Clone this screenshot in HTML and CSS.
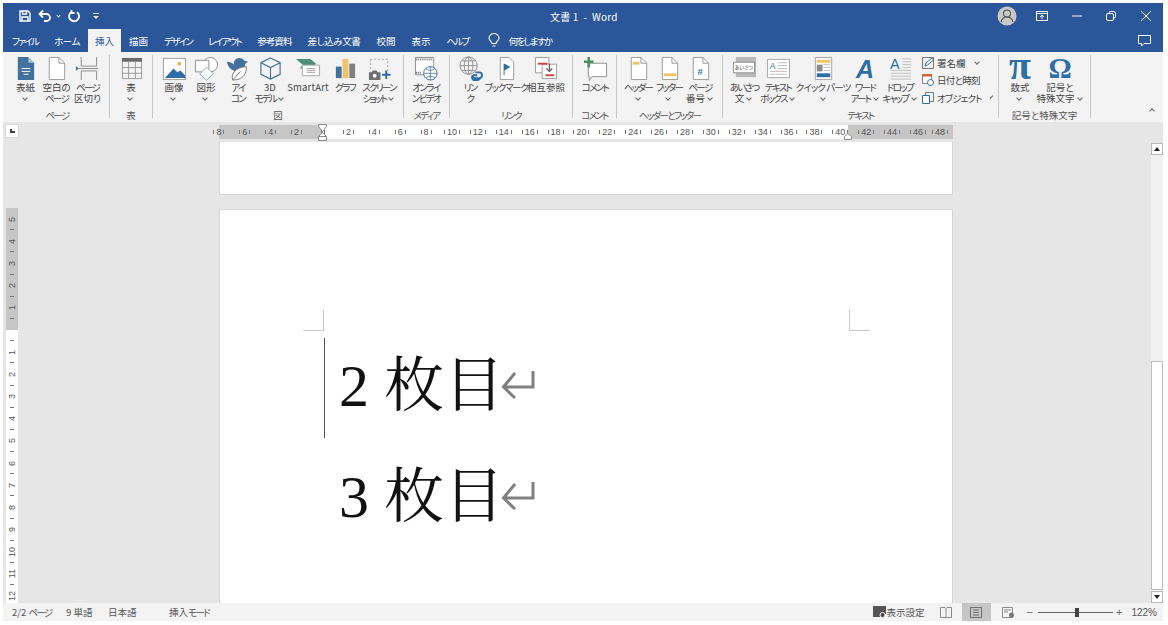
FILE: index.html
```html
<!DOCTYPE html>
<html lang="ja">
<head>
    <meta charset="UTF-8">
    <title>文書 1 - Word</title>
    <link rel="stylesheet" href="styles.css">
</head>

<body>
    <div id="word">
        <!-- タイトルバー -->
        <div class="titlebar">
            <div class="qat">
                <svg width="14" height="14" viewBox="0 0 14 14" fill="none" stroke="#fff" stroke-width="1.4"><path d="M2 2h8l2 2v8H2z"/><path d="M4.500 2v3h4V2M4 12V8h6v4"/></svg>
                <svg class="undo" width="16" height="14" viewBox="0 0 16 14" fill="none" stroke="#fff" stroke-width="1.8"><path d="M6 1.500 2.500 5 6 8.500M3 5h6.500a3 3 0 0 1 0 7H7"/></svg>
                <span class="chev white"></span>
                <svg class="redo" width="14" height="14" viewBox="0 0 14 14" fill="none" stroke="#fff" stroke-width="1.8"><path d="M10 3.200a5 5 0 1 1-5.500-.2M4.500 1v3h3"/></svg>
                <svg class="more" width="6" height="8" viewBox="0 0 6 8" fill="#dfe6f2"><path d="M0 1h6v1H0zM0 4h6L3 7z"/></svg>
            </div>
            <div class="doctitle">文書 1 &nbsp;-&nbsp; Word</div>
            <div class="winbtns">
                <svg class="avatar" width="20" height="20" viewBox="0 0 20 20"><circle cx="10" cy="10" r="9.500" fill="#c9c9c9"/><circle cx="10" cy="7.500" r="3.500" fill="none" stroke="#555" stroke-width="1.100"/><path d="M4 16c1-4 3-5 6-5s5 1 6 5" fill="none" stroke="#555" stroke-width="1.100"/></svg>
                <svg class="wb1" width="12" height="10" viewBox="0 0 12 10" fill="none" stroke="#fff"><path d="M.5.500h11v9H.5zM.5 2.500h11M6 8V4M4 6l2-2 2 2"/></svg>
                <svg class="wb2" width="10" height="10" viewBox="0 0 10 10" stroke="#fff"><path d="M0 5h10"/></svg>
                <svg class="wb3" width="10" height="10" viewBox="0 0 10 10" fill="none" stroke="#fff"><rect x=".5" y="2.500" width="7" height="7" rx="1.500"/><path d="M3 2.500V2a1.500 1.500 0 0 1 1.500-1.500h3A2 2 0 0 1 9.500 2.500v3A1.500 1.500 0 0 1 8 7h-.5"/></svg>
                <svg class="wb4" width="10" height="10" viewBox="0 0 10 10" stroke="#fff"><path d="M0 0l10 10M10 0 0 10"/></svg>
            </div>
        </div>

        <!-- タブ -->
        <div class="tabs">
            <span class="tab k">ファイル</span>
            <span class="tab k3">ホーム</span>
            <span class="tab active">挿入</span>
            <span class="tab">描画</span>
            <span class="tab k">デザイン</span>
            <span class="tab k">レイアウト</span>
            <span class="tab k1">参考資料</span>
            <span class="tab k3">差し込み文書</span>
            <span class="tab">校閲</span>
            <span class="tab">表示</span>
            <span class="tab k">ヘルプ</span>
            <svg class="bulb" width="12" height="15" viewBox="0 0 12 15" fill="none" stroke="#fff" stroke-width="1.100"><path d="M4 10.500C4 8.500 1 7.500 1 5a5 4.500 0 0 1 10 0c0 2.500-3 3.500-3 5.500zM4.500 13h3"/></svg>
            <span class="tab tell k">何をしますか</span>
            <svg class="cmt-ico" width="13" height="12" viewBox="0 0 13 12" fill="none" stroke="#fff"><path d="M.5.500h12v8H6L3.500 11V8.500h-3z"/></svg>
        </div>

        <!-- リボン -->
        <div class="ribbon">
            <div class="group g1">
                <div class="btns">
                    <div class="btn w31">
                        <svg class="ico" viewBox="0 0 26 26"><path d="M5 1h11l6 6v18H5z" fill="#41719c"/><path d="M16 1v6h6z" fill="#a9c4dd"/><path d="M9 13h9M9 16h9M11 19h5" stroke="#fff"/></svg>
                        <span class="lbl">表紙<br><i class="chev"></i></span>
                    </div>
                    <div class="btn w31">
                        <svg class="ico" viewBox="0 0 26 26"><path d="M5.500 1.500h10l6 6v17h-16z" fill="#fff" stroke="#9a9a9a"/><path d="M15.500 1.500v6h6" fill="none" stroke="#9a9a9a"/></svg>
                        <span class="lbl">空白の<br><span class="k">ページ</span></span>
                    </div>
                    <div class="btn w31">
                        <svg class="ico" viewBox="0 0 26 26" fill="none" stroke="#8a8a8a"><path d="M6.500 1v9.500h16V1M6.500 25V15.500h16V25M4 13h20"/><path d="M1 10.500 4 13l-3 2.500z" fill="#41719c" stroke="none"/></svg>
                        <span class="lbl"><span class="k">ページ</span><br>区切り</span>
                    </div>
                </div>
                <div class="glabel k">ページ</div>
            </div>

            <div class="group g2">
                <div class="btns">
                    <div class="btn w32">
                        <svg class="ico" viewBox="0 0 26 26"><path d="M3 2h21v4H3z" fill="#6b6b6b"/><path d="M3.500 6v17.500h20V6M3.500 12h20M3.500 18h20M10 6v17.500M17 6v17.500" fill="none" stroke="#9a9a9a"/></svg>
                        <span class="lbl">表<br><i class="chev"></i></span>
                    </div>
                </div>
                <div class="glabel">表</div>
            </div>

            <div class="group g3">
                <div class="btns">
                    <div class="btn w32">
                        <svg class="ico" viewBox="0 0 26 26"><rect x="1.500" y="2.500" width="23" height="22" fill="#fff" stroke="#a0a0a0"/><path d="M3 23 12 13l4 4 3-2 5 5v3z" fill="#2f6ea5"/><circle cx="18" cy="8" r="2" fill="#efb251"/></svg>
                        <span class="lbl">画像<br><i class="chev"></i></span>
                    </div>
                    <div class="btn w32">
                        <svg class="ico" viewBox="0 0 26 26" fill="#fff" stroke="#8e8e8e"><circle cx="17" cy="9" r="7.500"/><path d="M1.500 4.500h14v12h-14z"/><path d="M13 11.500l7 7-7 7-7-7z" stroke="#7fa5c8"/></svg>
                        <span class="lbl">図形<br><i class="chev"></i></span>
                    </div>
                    <div class="btn w32">
                        <svg class="ico" viewBox="0 0 26 26"><path d="M1 6c3 0 5 1 7 3 0-4 2-7 6-7 2 0 4 1 5 3l4 1-3 2c0 5-3 8-7 8-7 0-11-4-12-10z" fill="#41719c"/><path d="M7 25c-2-7 3-13 14-14 1 8-4 14-14 14zM7 25l8-9" fill="#fff" stroke="#7a7a7a"/></svg>
                        <span class="lbl k">アイ<br>コン</span>
                    </div>
                    <div class="btn w32">
                        <svg class="ico" viewBox="0 0 26 26" fill="none" stroke="#41719c" stroke-width="1.200"><path d="M13 2l10 5v12l-10 5-10-5V7zM3 7l10 5 10-5M13 12v12"/></svg>
                        <span class="lbl">3D<br><span class="k">モデル</span> <i class="chev"></i></span>
                    </div>
                    <div class="btn w44">
                        <svg class="ico" viewBox="0 0 26 26"><path d="M0 3h15l6 5-6 5H4l3-4z" fill="#4f8f7a"/><path d="M6.500 9.500h18v11h-18z" fill="#fff" stroke="#a5a5a5"/><path d="M11 13h9M11 15h9M11 17h9" stroke="#a5a5a5"/></svg>
                        <span class="lbl latin">SmartArt</span>
                    </div>
                    <div class="btn w30">
                        <svg class="ico" viewBox="0 0 26 26"><path d="M3 11h6v12H3z" fill="#41719c"/><path d="M10 3h6v20h-6z" fill="#efc36b"/><path d="M17 8h6v15h-6z" fill="#7f7f7f"/></svg>
                        <span class="lbl k">グラフ</span>
                    </div>
                    <div class="btn w38">
                        <svg class="ico" viewBox="0 0 26 26"><path d="M3.500 3.500h18v17" fill="none" stroke="#a5a5a5" stroke-dasharray="2 2"/><path d="M3.500 3.500v11" fill="none" stroke="#a5a5a5" stroke-dasharray="2 2"/><path d="M2 17h3l1-2h4l1 2h3v8H2z" fill="#6f6f6f"/><circle cx="8" cy="20.500" r="2" fill="#fff"/><path d="M20 15v9M15.500 19.500h9" stroke="#2f6ea5" stroke-width="2"/></svg>
                        <span class="lbl"><span class="k">スクリーン</span><br><span class="k">ショット</span> <i class="chev"></i></span>
                    </div>
                </div>
                <div class="glabel">図</div>
            </div>

            <div class="group g4">
                <div class="btns">
                    <div class="btn w34">
                        <svg class="ico" viewBox="0 0 26 26"><path d="M1.500 1.500h19v18h-19z" fill="#fff" stroke="#8e8e8e"/><path d="M2 3.500h18M2 17.500h6" stroke="#666" stroke-dasharray="1 1" stroke-width="2"/><circle cx="17" cy="18" r="7" fill="#fff" stroke="#41719c"/><path d="M10 18h14M17 11v14M12.500 13.500c3 2 6 2 9 0M12.500 22.500c3-2 6-2 9 0" fill="none" stroke="#41719c" stroke-width=".8"/></svg>
                        <span class="lbl k">オンライ<br>ン ビデオ</span>
                    </div>
                </div>
                <div class="glabel k">メディア</div>
            </div>

            <div class="group g5">
                <div class="btns">
                    <div class="btn w30">
                        <svg class="ico" viewBox="0 0 26 26" fill="none" stroke="#8a8a8a" stroke-width=".9"><circle cx="11" cy="10" r="9"/><path d="M2 10h18M11 1v18M4 5h14M4 15h14"/><ellipse cx="11" cy="10" rx="4.500" ry="9"/><path d="M18 17h4a3 3 0 0 1 0 6h-4a3 3 0 0 1-3-3" stroke="#2f6ea5" stroke-width="2"/><path d="M20 20h-4a3 3 0 0 0 0 5h4a3 3 0 0 0 3-2" stroke="#2f6ea5" stroke-width="2"/></svg>
                        <span class="lbl k">リン<br>ク</span>
                    </div>
                    <div class="btn w42">
                        <svg class="ico" viewBox="0 0 26 26"><path d="M6.500 1.500h9l5 5v18h-14z" fill="#fff" stroke="#9a9a9a"/><path d="M10 8v12h1v-5l6-3.500L11 8z" fill="#2f6ea5"/></svg>
                        <span class="lbl k4">ブックマーク</span>
                    </div>
                    <div class="btn w38">
                        <svg class="ico" viewBox="0 0 26 26"><path d="M1.500 1.500h14l0 16h-14z" fill="#fff" stroke="#9a9a9a"/><path d="M8.500 8.500h15v15h-15z" fill="#fff" stroke="#9a9a9a"/><path d="M4 8h10" stroke="#c9443a" stroke-width="2"/><path d="M12 20h9" stroke="#c9443a" stroke-width="2"/><path d="M16 8v7M13 13l3 3 3-3" fill="none" stroke="#555" stroke-width="1.200"/></svg>
                        <span class="lbl">相互参照</span>
                    </div>
                </div>
                <div class="glabel k">リンク</div>
            </div>

            <div class="group g6">
                <div class="btns">
                    <div class="btn w34">
                        <svg class="ico" viewBox="0 0 26 26"><path d="M5.500 7.500h19v14h-15l-3 4v-4h-1z" fill="#fff" stroke="#8e8e8e"/><path d="M6 1v11M1 6h10" stroke="#4f8f5f" stroke-width="2.600"/></svg>
                        <span class="lbl k">コメント</span>
                    </div>
                </div>
                <div class="glabel k">コメント</div>
            </div>

            <div class="group g7">
                <div class="btns">
                    <div class="btn w32">
                        <svg class="ico" viewBox="0 0 26 26"><path d="M5.500 1.500h10l6 6v17h-16z" fill="#fff" stroke="#9a9a9a"/><path d="M15.500 1.500v6h6" fill="none" stroke="#9a9a9a"/><path d="M7 6h7v3H7z" fill="#efc36b"/></svg>
                        <span class="lbl k">ヘッダー<br><i class="chev"></i></span>
                    </div>
                    <div class="btn w30">
                        <svg class="ico" viewBox="0 0 26 26"><path d="M5.500 1.500h10l6 6v17h-16z" fill="#fff" stroke="#9a9a9a"/><path d="M15.500 1.500v6h6" fill="none" stroke="#9a9a9a"/><path d="M7 18h13v3H7z" fill="#efc36b"/></svg>
                        <span class="lbl k">フッター<br><i class="chev"></i></span>
                    </div>
                    <div class="btn w32">
                        <svg class="ico" viewBox="0 0 26 26"><path d="M5.500 1.500h10l6 6v17h-16z" fill="#fff" stroke="#9a9a9a"/><path d="M15.500 1.500v6h6" fill="none" stroke="#9a9a9a"/><text x="10" y="20" class="hash">#</text></svg>
                        <span class="lbl"><span class="k">ページ</span><br>番号 <i class="chev"></i></span>
                    </div>
                </div>
                <div class="glabel k">ヘッダーとフッター</div>
            </div>

            <div class="group g8">
                <div class="btns">
                    <div class="btn w32">
                        <svg class="ico" viewBox="0 0 26 26"><path d="M4 1h21v21H4z" fill="#b9b9b9"/><path d="M1.500 6.500h22v11h-22z" fill="#fff" stroke="#8a8a8a"/><text x="3" y="14" class="tiny">あいさつ</text></svg>
                        <span class="lbl"><span class="k">あいさつ</span><br>文 <i class="chev"></i></span>
                    </div>
                    <div class="btn w36">
                        <svg class="ico" viewBox="0 0 26 26"><path d="M1.500 3.500h23v19h-23z" fill="#fff" stroke="#a5a5a5"/><text x="4" y="14" class="boxa">A</text><path d="M12 7h10M12 10h10M12 13h10M4 16h18M4 19h18" stroke="#bdbdbd"/></svg>
                        <span class="lbl"><span class="k">テキスト</span><br><span class="k">ボックス</span> <i class="chev"></i></span>
                    </div>
                    <div class="btn w54">
                        <svg class="ico" viewBox="0 0 26 26"><path d="M4.500 1.500h17v23h-17z" fill="#fff" stroke="#a5a5a5"/><path d="M6 4h14v3H6z" fill="#efc36b"/><path d="M6 9h6v7H6z" fill="#8a8a8a"/><path d="M13 9h7M13 12h7M13 15h7" stroke="#bdbdbd"/><path d="M6 18h14v4H6z" fill="#2f6ea5"/></svg>
                        <span class="lbl k1">クイック パーツ<br><i class="chev"></i></span>
                    </div>
                    <div class="btn w30">
                        <div class="ico wordart">A</div>
                        <span class="lbl"><span class="k">ワード</span><br><span class="k">アート</span> <i class="chev"></i></span>
                    </div>
                    <div class="btn w40">
                        <svg class="ico" viewBox="0 0 26 26"><text x="2" y="13" class="dropa">A</text><path d="M15 3h9M15 6h9M15 9h9M15 12h9M3 15h21M3 18h21M3 21h21M3 24h21" stroke="#bdbdbd"/></svg>
                        <span class="lbl"><span class="k">ドロップ</span><br><span class="k">キャップ</span> <i class="chev"></i></span>
                    </div>
                    <div class="stack">
                        <div class="sitem">
                            <svg width="12" height="12" viewBox="0 0 12 12" fill="none" stroke="#7a7a7a"><path d="M.5.500h11v11H.5z"/><path d="M3 9l1-3 6-5 1.500 2-6 5z" fill="#fff" stroke="#2f6ea5"/></svg>
                            <span>署名欄</span><i class="chev"></i>
                        </div>
                        <div class="sitem">
                            <svg width="12" height="12" viewBox="0 0 12 12"><path d="M.5.500h9v9h-9z" fill="#fff" stroke="#8a8a8a"/><path d="M0 0h10v2.500H0z" fill="#c9643a"/><circle cx="8.500" cy="8.500" r="3" fill="#fff" stroke="#2f6ea5"/></svg>
                            <span class="k2">日付と時刻</span>
                        </div>
                        <div class="sitem">
                            <svg width="12" height="12" viewBox="0 0 12 12" fill="none" stroke="#7a7a7a"><path d="M3.500.500h8v9h-8z"/><path d="M.5 3.500h7v8h-7z" fill="#fff" stroke="#2f6ea5"/></svg>
                            <span class="k1">オブジェクト</span><i class="chev"></i>
                        </div>
                    </div>
                </div>
                <div class="glabel k">テキスト</div>
            </div>

            <div class="group g9">
                <div class="btns">
                    <div class="btn w32">
                        <div class="ico sym pi">π</div>
                        <span class="lbl">数式<br><i class="chev"></i></span>
                    </div>
                    <div class="btn w48">
                        <div class="ico sym">Ω</div>
                        <span class="lbl">記号と<br>特殊文字 <i class="chev"></i></span>
                    </div>
                </div>
                <div class="glabel">記号と特殊文字</div>
            </div>

            <div class="collapse"><i class="chev up"></i></div>
        </div>

        <!-- 編集画面 -->
        <div class="canvas">
            <div class="leftcol">
                <div class="tabsel"><span></span></div>
                <div class="vruler">
                    <div class="vc"><span>5</span></div>
                    <div class="vc"><span>4</span></div>
                    <div class="vc"><span>3</span></div>
                    <div class="vc"><span>2</span></div>
                    <div class="vc"><span>1</span></div>
                    <div class="vc"></div>
                    <div class="vc"><span>1</span></div>
                    <div class="vc"><span>2</span></div>
                    <div class="vc"><span>3</span></div>
                    <div class="vc"><span>4</span></div>
                    <div class="vc"><span>5</span></div>
                    <div class="vc"><span>6</span></div>
                    <div class="vc"><span>7</span></div>
                    <div class="vc"><span>8</span></div>
                    <div class="vc"><span>9</span></div>
                    <div class="vc"><span>10</span></div>
                    <div class="vc"><span>11</span></div>
                    <div class="vc"><span>12</span></div>
                </div>
            </div>

            <div class="midcol">
                <div class="hruler" id="hruler">
                    <svg class="indent" width="12" height="18" viewBox="0 0 12 18" fill="#fff" stroke="#8a8a8a"><path d="M1.500.500h8v2l-4 5-4-5zM1.500 16.500h8v-4l-4-4-4 4z"/><path d="M1.500 12.500h8"/></svg>
                    <svg class="rindent" width="10" height="7" viewBox="0 0 10 7" fill="#fff" stroke="#8a8a8a"><path d="M1.500 6.500v-3l3.500-3 3.500 3v3z"/></svg>
                </div>
                <div class="page first"></div>
                <div class="page second">
                    <span class="crop cl"></span>
                    <span class="crop cr"></span>
                    <span class="caret"></span>
                    <div class="line">2 枚目<svg class="ret" width="34" height="30" viewBox="0 0 34 30" fill="none" stroke="#808080" stroke-width="3"><path d="M32 1v16H3M14 3 2.500 17 14 28"/></svg></div>
                    <div class="line">3 枚目<svg class="ret" width="34" height="30" viewBox="0 0 34 30" fill="none" stroke="#808080" stroke-width="3"><path d="M32 1v16H3M14 3 2.500 17 14 28"/></svg></div>
                </div>
            </div>

            <div class="rightcol">
                <div class="scrollbar">
                    <div class="sbtn"><i class="tri"></i></div>
                    <div class="strack"></div>
                    <div class="sthumb"></div>
                    <div class="sbtn"><i class="tri down"></i></div>
                </div>
            </div>
        </div>

        <!-- ステータスバー -->
        <div class="statusbar">
            <span class="st s1">2/2 <span class="k">ページ</span></span>
            <span class="st s2">9 単語</span>
            <span class="st s3">日本語</span>
            <span class="st">挿入<span class="k">モード</span></span>
            <div class="stright">
                <svg width="13" height="12" viewBox="0 0 13 12"><path d="M0 0h13v8H7v3H0z" fill="#555"/><circle cx="9.500" cy="9" r="2.500" fill="#444" stroke="#f3f3f3"/></svg>
                <span class="st disp">表示設定</span>
                <svg class="vw1" width="12" height="11" viewBox="0 0 12 11" fill="none" stroke="#8a8a8a"><path d="M.5.500h4.500l1 1 1-1h4.500v10H.5zM6 1.500v9"/></svg>
                <div class="vw2"><svg width="12" height="11" viewBox="0 0 12 11" fill="none" stroke="#6f6f6f"><path d="M.5.500h11v10H.5zM3 3h6M3 5.500h6M3 8h6"/></svg></div>
                <svg class="vw3" width="13" height="11" viewBox="0 0 13 11" fill="none" stroke="#8a8a8a"><path d="M.5.500h10v10H.5zM2 3h7M2 5h4"/><circle cx="9.500" cy="8" r="2.500" fill="#777" stroke="none"/></svg>
                <span class="zm minus">−</span>
                <div class="slider"><span class="knob"></span></div>
                <span class="zm">+</span>
                <span class="st pct">122%</span>
            </div>
        </div>
    </div>

    <script>
        // 水平ルーラーの目盛り
        const hruler = document.getElementById('hruler')
        const nums = [8, 6, 4, 2, '']
        for (let i = 2; i <= 48; i += 2) nums.push(i)
        nums.forEach(n => {
            const c = document.createElement('div')
            c.className = 'hc'
            c.innerHTML = '<span>' + n + '</span>'
            hruler.appendChild(c)
        })
    </script>
</body>

</html>
```
FILE: styles.css
```css
* {
    box-sizing: border-box;
}

html,
body {
    margin: 0;
    height: 100%;
    background: #fff;
    overflow: hidden;
}

body {
    padding: 3px 5px 4px 3px;
    font-family: "Noto Sans CJK JP", "Noto Sans", sans-serif;
    font-feature-settings: "palt";
    color: #444;
}

i {
    font-style: normal;
}

/* kana is much narrower in the original UI font */
.k {
    letter-spacing: -1.700px;
}

.k1 {
    letter-spacing: -.900px;
}

.k2 {
    letter-spacing: -.700px;
}

.k3 {
    letter-spacing: -.400px;
}

.k4 {
    letter-spacing: -1.300px;
}

#word {
    height: 618px;
    display: flex;
    flex-direction: column;
    background: #e6e6e6;
}

/* title bar */
.titlebar {
    height: 26px;
    flex: none;
    background: #2b579a;
    color: #fff;
    display: flex;
    align-items: center;
    position: relative;
}

.qat {
    display: flex;
    align-items: center;
    padding-left: 15px;
}

.undo {
    margin-left: 5px;
}

.redo {
    margin-left: 5px;
}

.more {
    margin-left: 12px;
}

.doctitle {
    position: absolute;
    left: 547px;
    font-size: 10px;
    letter-spacing: .200px;
    white-space: nowrap;
}

.winbtns {
    margin-left: auto;
    display: flex;
    align-items: center;
    padding-right: 12px;
}

.wb1 {
    margin-left: 19px;
}

.wb2 {
    margin-left: 24px;
}

.wb3 {
    margin-left: 24px;
}

.wb4 {
    margin-left: 25px;
}

/* tabs */
.tabs {
    height: 23px;
    flex: none;
    background: #2b579a;
    display: flex;
    align-items: stretch;
    padding-left: 1px;
}

.tab {
    display: flex;
    align-items: center;
    padding: 0 8px;
    font-size: 9.500px;
    color: #fff;
    white-space: nowrap;
}

.tab.active {
    background: #f3f3f3;
    color: #2b579a;
    padding: 0 7px;
}

.bulb {
    align-self: center;
    margin-left: 11px;
}

.tell {
    padding-left: 9px;
}

.cmt-ico {
    align-self: center;
    margin-left: auto;
    margin-right: 12px;
}

/* ribbon */
.ribbon {
    height: 70px;
    flex: none;
    background: #f3f3f3;
    display: flex;
    padding-top: 3px;
    position: relative;
}

.group {
    height: 63px;
    padding: 0 5px;
    border-right: 1px solid #c6c6c6;
    display: flex;
    flex-direction: column;
}

.g1 {
    width: 107px;
    padding-left: 7px;
}

.g2 {
    width: 43px;
}

.g3 {
    width: 251px;
}

.g4 {
    width: 46px;
}

.g5 {
    width: 123px;
}

.g6 {
    width: 44px;
}

.g7 {
    width: 106px;
}

.g8 {
    width: 276px;
}

.g9 {
    width: 92px;
}

.btns {
    display: flex;
    height: 55px;
    flex: none;
}

.btn {
    flex: none;
    display: flex;
    flex-direction: column;
    align-items: center;
    text-align: center;
}

.w30 { width: 30px; }
.w31 { width: 31px; }
.w32 { width: 32px; }
.w34 { width: 34px; }
.w36 { width: 36px; }
.w38 { width: 38px; }
.w40 { width: 40px; }
.w42 { width: 42px; }
.w44 { width: 44px; }
.w48 { width: 48px; }
.w54 { width: 54px; }

.ico {
    width: 25px;
    height: 25px;
    flex: none;
    margin: 1px 0 1px;
}

.lbl {
    font-size: 9.500px;
    line-height: 11px;
    white-space: nowrap;
    color: #444;
}

.lbl.latin {
    font-size: 9.500px;
    letter-spacing: .200px;
}

.glabel {
    height: 11px;
    line-height: 11px;
    font-size: 9.500px;
    text-align: center;
    color: #555;
    white-space: nowrap;
}

.chev {
    display: inline-block;
    width: 4px;
    height: 4px;
    border-right: 1px solid #666;
    border-bottom: 1px solid #666;
    transform: rotate(45deg);
    margin: 0 2px 2px 1px;
    vertical-align: middle;
}

.chev.white {
    border-color: #dfe6f2;
    margin-left: 4px;
    width: 3px;
    height: 3px;
}

.chev.up {
    transform: rotate(225deg);
}

.hash {
    font: bold 10px "Liberation Sans", sans-serif;
    fill: #2f6ea5;
}

.tiny {
    font-size: 5px;
    fill: #333;
}

.boxa {
    font: 9px "Liberation Sans", sans-serif;
    fill: #2f6ea5;
}

.dropa {
    font: 15px "Liberation Sans", sans-serif;
    fill: #2f6ea5;
}

.wordart {
    font: italic bold 25px/26px "Liberation Sans", sans-serif;
    color: #2f6ea5;
    text-align: center;
}

.sym {
    font: bold 29px/24px "Liberation Serif", serif;
    color: #2f6ea5;
    text-align: center;
}

.sym.pi {
    font-size: 40px;
    line-height: 20px;
}

.stack {
    flex: none;
    width: 70px;
    margin: -1px 0 0 2px;
}

.sitem {
    height: 17.500px;
    display: flex;
    align-items: center;
    gap: 3px;
    font-size: 9.500px;
    white-space: nowrap;
}

.sitem svg {
    flex: none;
}

.sitem .chev {
    margin-left: 6px;
}

.collapse {
    margin-left: auto;
    align-self: flex-end;
    padding: 0 7px 1px 0;
}

/* canvas */
.canvas {
    flex: 1;
    min-height: 0;
    display: flex;
    overflow: hidden;
}

.leftcol {
    width: 216px;
    flex: none;
    padding: 2px 0 0 2px;
}

.tabsel {
    width: 14px;
    height: 14px;
    background: #fff;
    border: 1px solid #d9d9d9;
    display: flex;
    align-items: center;
    justify-content: center;
}

.tabsel span {
    width: 5px;
    height: 4px;
    border-left: 2px solid #444;
    border-bottom: 2px solid #444;
}

.vruler {
    width: 12px;
    height: 395px;
    margin: 70px 0 0 1px;
    overflow: hidden;
    background: linear-gradient(#c6c6c6 122px, #fff 122px);
}

.vc {
    height: 22.200px;
    display: flex;
    align-items: center;
    justify-content: center;
    font: 9px/1 "Liberation Sans", sans-serif;
    color: #555;
    background: linear-gradient(#777, #777) center bottom / 4px 1px no-repeat;
}

.vc span {
    writing-mode: vertical-rl;
    transform: rotate(180deg);
}

.midcol {
    width: 734px;
    flex: none;
    display: flex;
    flex-direction: column;
    min-height: 0;
}

.hruler {
    height: 14px;
    flex: none;
    margin-top: 3px;
    margin-bottom: 3px;
    display: flex;
    position: relative;
    overflow: visible;
    background: linear-gradient(90deg, #c6c6c6 104px, #fff 104px, #fff 629px, #c6c6c6 629px);
}

.hc {
    flex: none;
    width: 25.900px;
    display: flex;
    justify-content: center;
    align-items: center;
    font: 9px/1 "Liberation Sans", sans-serif;
    color: #555;
}

.hc:first-of-type {
    margin-left: -13px;
}

.hc:last-child {
    width: 20.500px;
    justify-content: flex-start;
    padding-left: 1px;
}

.hc span {
    display: flex;
    align-items: center;
    gap: 2px;
}

.hc span::before,
.hc span::after {
    content: "";
    width: 1px;
    height: 4px;
    background: #777;
}

.indent {
    position: absolute;
    left: 98px;
    top: -1px;
    z-index: 1;
}

.rindent {
    position: absolute;
    left: 624px;
    top: 8px;
    z-index: 1;
}

.page {
    background: #fff;
    border: 1px solid #d6d6d6;
    flex: none;
}

.page.first {
    height: 53px;
    border-top: none;
}

.page.second {
    margin-top: 14px;
    flex: 1;
    border-bottom: none;
    padding: 119px 0 0 119px;
    position: relative;
}

.line {
    height: 111px;
    padding-top: 4px;
    display: flex;
    align-items: center;
    font: 60px/107px "Liberation Serif", "Noto Serif CJK JP", "Noto Sans CJK JP", serif;
    font-feature-settings: normal;
    color: #111;
    white-space: pre;
}

.ret {
    margin: -4px 0 0 -3px;
}

.crop {
    position: absolute;
    top: 100px;
    width: 21px;
    height: 21px;
    border-bottom: 1px solid #c8c8c8;
}

.crop.cl {
    left: 83px;
    border-right: 1px solid #c8c8c8;
}

.crop.cr {
    left: 629px;
    border-left: 1px solid #c8c8c8;
}

.caret {
    position: absolute;
    left: 104px;
    top: 128px;
    width: 1px;
    height: 100px;
    background: #555;
}

/* scrollbar */
.rightcol {
    flex: 1;
    display: flex;
    justify-content: flex-end;
    padding-top: 21px;
    min-height: 0;
}

.scrollbar {
    width: 12px;
    height: 460px;
    display: flex;
    flex-direction: column;
    background: #f0f0f0;
}

.sbtn {
    height: 12px;
    flex: none;
    background: #fff;
    border: 1px solid #b9b9b9;
    display: flex;
    align-items: center;
    justify-content: center;
}

.tri {
    border: 3.500px solid transparent;
    border-top: none;
    border-bottom: 4px solid #222;
}

.tri.down {
    border-bottom: none;
    border-top: 4px solid #222;
}

.strack {
    height: 206px;
    flex: none;
}

.sthumb {
    height: 229px;
    flex: none;
    background: #fff;
    border: 1px solid #bfbfbf;
    margin-bottom: 1px;
}

/* status bar */
.statusbar {
    height: 18px;
    flex: none;
    background: #f3f3f3;
    display: flex;
    align-items: center;
    padding-left: 9px;
    font-size: 9.500px;
}

.st {
    white-space: nowrap;
    color: #555;
}

.s1 {
    width: 54px;
}

.s2 {
    width: 42px;
}

.s3 {
    width: 61px;
}

.stright {
    margin-left: auto;
    display: flex;
    align-items: center;
    height: 18px;
    padding-right: 6px;
}

.disp {
    margin-left: 1px;
    font-size: 9.500px;
}

.vw1 {
    margin-left: 15px;
}

.vw2 {
    width: 29px;
    height: 18px;
    margin-left: 10px;
    background: #c6c6c6;
    display: flex;
    align-items: center;
    justify-content: center;
}

.vw3 {
    margin-left: 11px;
}

.zm {
    font: 11px/1 "Liberation Sans", sans-serif;
    color: #666;
}

.minus {
    margin-left: 12px;
}

.slider {
    width: 75px;
    height: 1px;
    margin: 0 3px 0 5px;
    background: #666;
    position: relative;
}

.knob {
    position: absolute;
    left: 37px;
    top: -4px;
    width: 4px;
    height: 9px;
    background: #444;
}

.pct {
    margin-left: 9px;
    font: 10px "Liberation Sans", sans-serif;
}
```
